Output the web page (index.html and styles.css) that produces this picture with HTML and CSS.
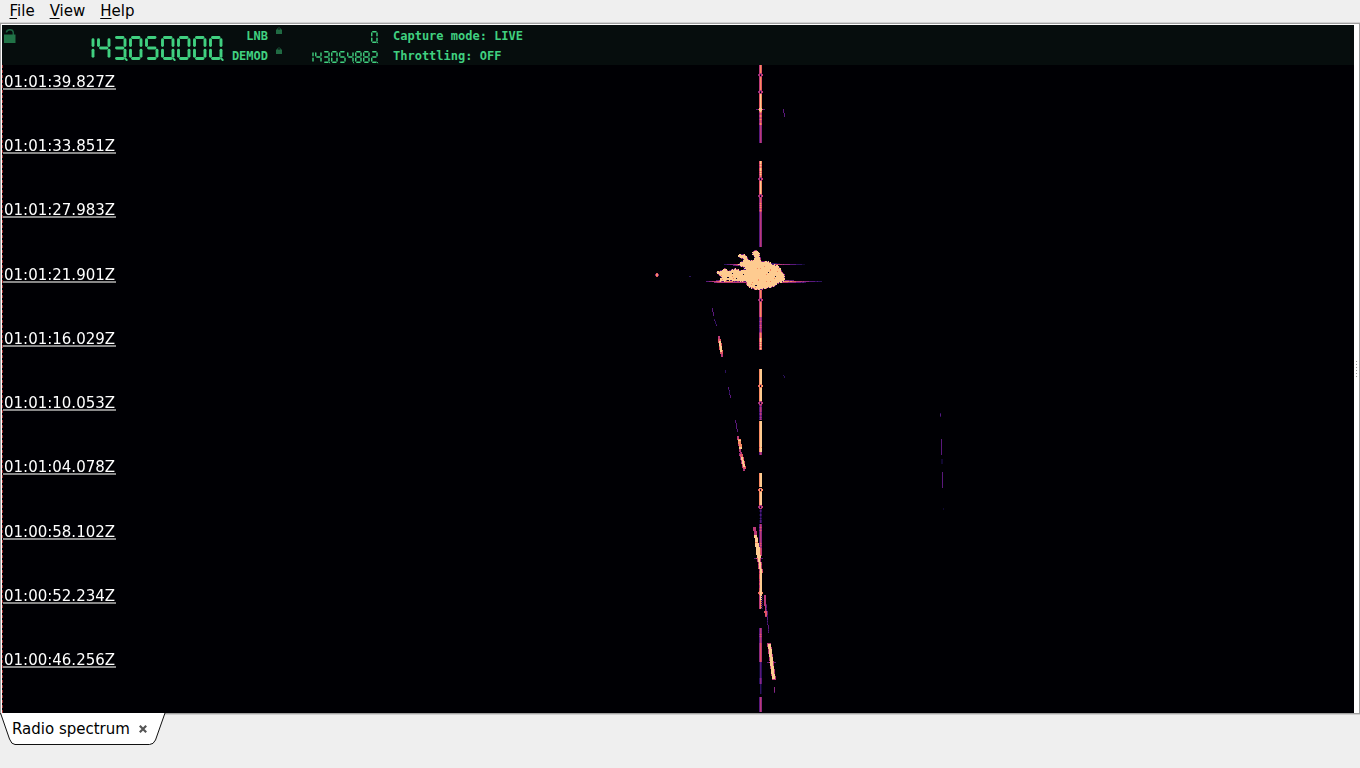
FILE: index.html
```html
<!DOCTYPE html>
<html lang="en">
<head>
    <meta charset="UTF-8">
    <meta name="viewport" content="width=device-width, initial-scale=1.0">
    <title>Radio spectrum</title>
    <link rel="stylesheet" href="styles.css">
</head>
<body>

    <nav class="menubar">
        <span><u>F</u>ile</span>
        <span><u>V</u>iew</span>
        <span><u>H</u>elp</span>
    </nav>

    <main class="panel">
        <div class="screen">
            <header class="toolbar">
                <svg class="lock-open" width="12" height="14" viewBox="0 0 12 14">
                    <path d="M2.5 3.5V3Q3 .8 6 .8T9.3 3.5V6" fill="none" stroke="#1c6240" stroke-width="1.5"/>
                    <rect x="0" y="5.5" width="11.5" height="8.5" fill="#217347"/>
                </svg>
                <div class="lcd lcd-main" data-value="143.050.000."></div>
                <div class="names">
                    <span>LNB</span>
                    <span>DEMOD</span>
                </div>
                <div class="locks">
                    <svg width="6" height="7" viewBox="0 0 6 7"><path d="M1.5 3V1.5Q3 0 4.5 1.5V3" fill="none" stroke="#174a32"/><rect y="2.5" width="6" height="4.5" fill="#206b43"/></svg>
                    <svg width="6" height="7" viewBox="0 0 6 7"><path d="M1.5 3V1.5Q3 0 4.5 1.5V3" fill="none" stroke="#174a32"/><rect y="2.5" width="6" height="4.5" fill="#206b43"/></svg>
                </div>
                <div class="values">
                    <div class="lcd lcd-small" data-value="0."></div>
                    <div class="lcd lcd-small" data-value="143.054.882."></div>
                </div>
                <div class="status">
                    <span>Capture mode: LIVE</span>
                    <span>Throttling: OFF</span>
                </div>
            </header>
            <div class="waterfall">
                <canvas id="waterfall" width="1352" height="648"></canvas>
                <div class="times">
                    <span>01:01:39.827Z</span>
                    <span>01:01:33.851Z</span>
                    <span>01:01:27.983Z</span>
                    <span>01:01:21.901Z</span>
                    <span>01:01:16.029Z</span>
                    <span>01:01:10.053Z</span>
                    <span>01:01:04.078Z</span>
                    <span>01:00:58.102Z</span>
                    <span>01:00:52.234Z</span>
                    <span>01:00:46.256Z</span>
                </div>
            </div>
        </div>
        <div class="grip"><i></i><i></i><i></i><i></i><i></i><i></i></div>
    </main>

    <footer class="tabs">
        <div class="tab">
            <svg class="tab-shape" width="166" height="32" viewBox="0 0 166 32">
                <path d="M.5 0L9.5 26Q11.5 31.5 15 31.5H149.5Q153.500 31.500 155.500 27L165 0" fill="#fff" stroke="#111"/>
            </svg>
            <span class="tab-name">Radio spectrum</span>
            <svg class="tab-close" width="8" height="8" viewBox="0 0 8 8"><path d="M.8 .8L7.200 7.200M7.200 .8L.8 7.200" stroke="#555" stroke-width="2.2"/></svg>
        </div>
    </footer>

    <script src="spectrum.js"></script>
</body>
</html>
```
FILE: styles.css
```css
* {
    box-sizing: border-box;
}

body {
    margin: 0;
    height: 768px;
    overflow: hidden;
    background: #efefef;
    color: #000;
    font-family: "DejaVu Sans", sans-serif;
    font-size: 15px;
    display: flex;
    flex-direction: column;
}

/* menu */
.menubar {
    height: 22px;
    padding-left: 9.5px;
    display: flex;
    gap: 15px;
    line-height: 22px;
}

.menubar u {
    text-underline-offset: 2px;
    text-decoration-thickness: 1px;
}

/* spectrum panel */
.panel {
    height: 692px;
    display: flex;
    background: #fff;
    border-top: 1px solid #d2d2d2;
    border-bottom: 1px solid #a0a0a0;
    box-shadow: inset 1px 1px #a0a0a0, inset -1px 0 #a0a0a0;
    padding: 2px 1px 0 2px;
}

.screen {
    width: 1352px;
    background: #000004;
}

.grip {
    width: 5px;
    display: flex;
    flex-direction: column;
    align-items: center;
    justify-content: center;
    gap: 2px;
}

.grip i {
    width: 1px;
    height: 1px;
    background: #999;
}

/* toolbar */
.toolbar {
    height: 40px;
    display: flex;
    background: #060d0d;
    color: #40d080;
    font: bold 12px/20px "DejaVu Sans Mono", monospace;
}

.lock-open {
    margin: 4px 0 0 2px;
}

.lcd svg {
    display: block;
}

.lcd-main {
    width: 146px;
    margin: 11px 0 0 65px;
}

.lcd-main svg {
    width: 146px;
    height: 26px;
    stroke-width: 2.9;
}

.names,
.locks,
.values,
.status {
    display: flex;
    flex-direction: column;
    white-space: nowrap;
}

.names {
    width: 41px;
    text-align: right;
}

.names,
.status {
    padding-top: 1px;
}

.locks {
    margin-left: 8px;
    padding-top: 2px;
    gap: 13px;
}

.values {
    width: 97.5px;
    padding-top: 6px;
    align-items: flex-end;
    gap: 7px;
}

.lcd-small svg {
    height: 13px;
    stroke-width: 2.8;
}

.status {
    margin-left: 13.5px;
}

/* waterfall */
.waterfall {
    position: relative;
    height: 648px;
    border-left: 1px dashed #a03030;
}

.waterfall canvas {
    display: block;
    margin-left: -1px;
    width: 1352px;
    height: 648px;
}

.times {
    position: absolute;
    top: 7px;
    left: 0;
    display: flex;
    flex-direction: column;
    gap: 46.22px;
    color: #fff;
    line-height: 20px;
}

.times span {
    height: 18px;
    padding-left: 1px;
    width: 112.5px;
    box-shadow: 0 -1px #888 inset;
    border-bottom: 1px solid #888;
}

/* tabs */
.tabs {
    height: 54px;
    border-top: 1px solid #cfcfcf;
}

.tab {
    position: relative;
    width: 166px;
    height: 32px;
    margin-top: -2px;
    display: flex;
    align-items: center;
    padding-left: 12px;
}

.tab-shape {
    position: absolute;
    left: 0;
    top: 0;
}

.tab-name {
    position: relative;
    line-height: 32px;
}

.tab-close {
    position: relative;
    margin-left: 9px;
    top: 0;
}
```
FILE: spectrum.js
```js
// seven segment readouts
const segments = {
    a: 'M3.500 1.500H10', b: 'M12 3.800V9.500', c: 'M12 14.200V20.200', d: 'M3.500 22.500H10',
    e: 'M1.500 14.200V20.200', f: 'M1.500 3.800V9.500', g: 'M3.500 12H10'
};
const digits = {
    0: 'abcdef', 1: 'bc', 2: 'abdeg', 3: 'abcdg', 4: 'bcfg', 5: 'acdfg', 8: 'abcdefg'
};

document.querySelectorAll('.lcd').forEach(lcd => {
    const value = lcd.dataset.value;
    const count = value.replace(/\./g, '').length;
    let n = -1;
    let d = '';
    let dots = '';
    for (const ch of value) {
        if (ch === '.') {
            dots += `<path d="M${n * 16 + 12.2} 22.500l1.500 1.500" stroke-width="2"/>`;
        } else {
            n++;
            for (const s of digits[ch]) {
                d += `<path transform="translate(${n * 16} 0)" d="${segments[s]}"/>`;
            }
        }
    }
    const w = count * 16 + 1;
    const small = lcd.classList.contains('lcd-small');
    lcd.innerHTML = `<svg role="img" aria-label="${value}" width="${small ? w / 2 : w}" viewBox="0 0 ${w} 26" preserveAspectRatio="xMinYMin" fill="none" stroke="#40d080" stroke-linecap="round">${d}${dots}</svg>`;
});

// waterfall
const ctx = document.getElementById('waterfall').getContext('2d');
ctx.translate(-2, -65);

let seed = 7;
function rnd() {
    seed = (seed * 16807) % 2147483647;
    return seed / 2147483647;
}

const heat = ['#000004', '#100830', '#2c1160', '#5a187c', '#8c2981', '#bb3978', '#e25665', '#f88a62', '#fecb90'];

function px(x, y, level, w = 1, h = 1) {
    ctx.fillStyle = heat[Math.max(0, Math.min(8, Math.round(level)))];
    ctx.fillRect(Math.round(x), Math.round(y), w, h);
}

// carrier: from, to, level
const carrier = [
    [65, 73, 7], [76, 90, 7], [93, 108, 8], [108, 112, 8], [112, 125, 6.5], [125, 143, 5],
    [161, 177, 7.6], [180, 194, 7.8], [197, 212, 6.4], [212, 247, 5],
    [288, 298, 7], [301, 317, 7], [317, 333, 5.4], [333, 350, 7.3],
    [369, 384, 9], [388, 401, 9], [404, 420, 4.8], [421, 452, 8.8], [452, 455, 5],
    [473, 487, 9], [491, 506, 9], [508, 523, 2.5], [524, 548, 5.3], [548, 556, 6],
    [573, 591, 7.5], [595, 609, 7], [628, 643, 5.2], [643, 662, 6], [662, 678, 3],
    [678, 684, 4], [684, 694, 2], [697, 712, 5]
];
for (const [from, to, level] of carrier) {
    for (let y = from; y < to; y++) {
        const n = (rnd() - 0.5) * 0.8;
        px(760, y, level + n);
        px(759, y, level - 2 + n);
        px(761, y, level - 1 + n);
    }
}

// nodes, brighter ones are the wide rings
for (const y of [74, 91, 178, 195, 299, 385, 402, 489, 506, 592]) {
    const l = y === 385 || y === 489 || y === 592 ? 7 : 4.5;
    px(759, y - 1, l, 3);
    px(758, y, l - 1, 1, 2);
    px(759, y, l, 1, 2);
    px(760, y, 2);
    px(761, y, l, 2, 2);
    px(759, y + 2, l, 3);
}

// crossing marks
for (const [x, y] of [[760, 109], [758, 558], [771, 662]]) {
    px(x - 4, y, 3, 9);
    px(x - 2, y, 6, 5);
    px(x - 1, y - 1, 8, 3, 3);
}

// drifting echoes: x, y, x, y, level, width
const echoes = [
    [712, 308, 713, 315, 3, 1], [714, 319, 716, 325, 2.4, 1],
    [718, 336, 721, 356, 5, 2], [718, 339, 720, 353, 6.5, 3], [719, 341, 720, 351, 9, 2],
    [725, 370, 725, 372, 2, 1], [728, 387, 730, 397, 2.5, 1],
    [735, 420, 737, 431, 3, 1], [737, 436, 740, 455, 5, 2], [738, 439, 739, 448, 7.4, 3],
    [739, 453, 743, 470, 4.5, 2], [740, 454, 743, 468, 6, 3], [741, 457, 743, 466, 9, 2],
    [753, 527, 757, 553, 5, 3], [754, 535, 757, 553, 7.6, 3], [755, 543, 757, 558, 9, 4],
    [757, 558, 759, 572, 5.5, 4], [758, 558, 760, 572, 9, 2], [760, 572, 760, 599, 8, 2],
    [764, 595, 765, 616, 5, 2], [764, 611, 765, 615, 6, 3], [766, 604, 768, 632, 2.8, 1],
    [767, 643, 772, 679, 5, 4], [768, 644, 772, 678, 9, 3], [774, 687, 774, 692, 3.5, 1],
    [783, 109, 784, 116, 2.7, 1], [783, 375, 784, 377, 2, 1],
    [940, 413, 940, 416, 2.6, 1], [941, 439, 941, 454, 3, 1],
    [941, 459, 941, 463, 1, 2], [942, 472, 942, 487, 3, 1], [943, 508, 943, 509, 1, 1],
    [689, 276, 690, 276, 1.6, 2]
];
for (const [x1, y1, x2, y2, level, w] of echoes) {
    for (let y = y1; y <= y2; y++) {
        const x = x1 + (x2 - x1) * (y - y1) / Math.max(1, y2 - y1);
        px(x, y, level + (rnd() - 0.5), w);
    }
}

// interference between the echo and the carrier
for (let y = 596; y < 609; y += 2) {
    px(761, y, 2, 2);
}

// small echo on the left
px(655, 274, 4, 4, 2);
px(656, 273, 6, 2, 4);
px(656, 274, 7, 2, 2);

// side bands of the head echo: y, from, to, core from, core to, level
const bands = [
    [263, 742, 780, 748, 765, 3], [264, 724, 805, 738, 774, 5.5], [265, 733, 778, 738, 768, 4],
    [280, 716, 794, 722, 784, 4], [281, 706, 822, 720, 788, 6.5], [282, 714, 806, 718, 784, 5]
];
for (const [y, from, to, c1, c2, level] of bands) {
    for (let x = from; x < to; x++) {
        const out = x < c1 ? (c1 - x) / 3.5 : x > c2 ? (x - c2) / 6.5 : 0;
        px(x, y, Math.max(level - out, 0.6) + rnd() * 0.5);
    }
}

// head echo
const head = [
    [739, 255], [744, 255], [747, 258], [749, 261], [755, 261], [755, 256], [753, 254], [753, 252], [756, 251],
    [759, 253], [760, 262], [768, 262], [773, 265], [779, 267], [781, 271], [784, 275], [784, 281],
    [777, 283], [774, 286], [765, 288], [760, 289], [755, 289], [748, 286], [746, 281], [737, 281],
    [730, 280], [720, 281], [722, 277], [717, 272], [723, 271], [725, 269], [728, 272], [735, 269],
    [740, 271], [746, 270], [745, 267], [739, 265], [741, 262], [745, 261], [743, 258], [739, 257]
];
const shape = new Path2D();
head.forEach(([x, y]) => shape.lineTo(x, y));
shape.closePath();

function inside(x, y) {
    return ctx.isPointInPath(shape, x + 0.5 - 2, y + 0.5 - 65);
}

for (let y = 249; y < 292; y++) {
    for (let x = 712; x < 790; x++) {
        if (inside(x, y)) {
            px(x, y, rnd() < 0.02 ? 7 : 8);
        } else if (inside(x - 1, y) || inside(x + 1, y) || inside(x, y - 1) || inside(x, y + 1)) {
            const r = rnd();
            px(x, y, r < 0.4 ? 8 : r < 0.65 ? 5 : 3);
        }
    }
}
for (const [x, y, w] of [[727, 277, 2], [727, 280, 2], [755, 285, 2], [768, 272, 1], [743, 274, 1], [775, 276, 1], [732, 273, 1], [736, 278, 1]]) {
    px(x, y, 1, w);
}
```
